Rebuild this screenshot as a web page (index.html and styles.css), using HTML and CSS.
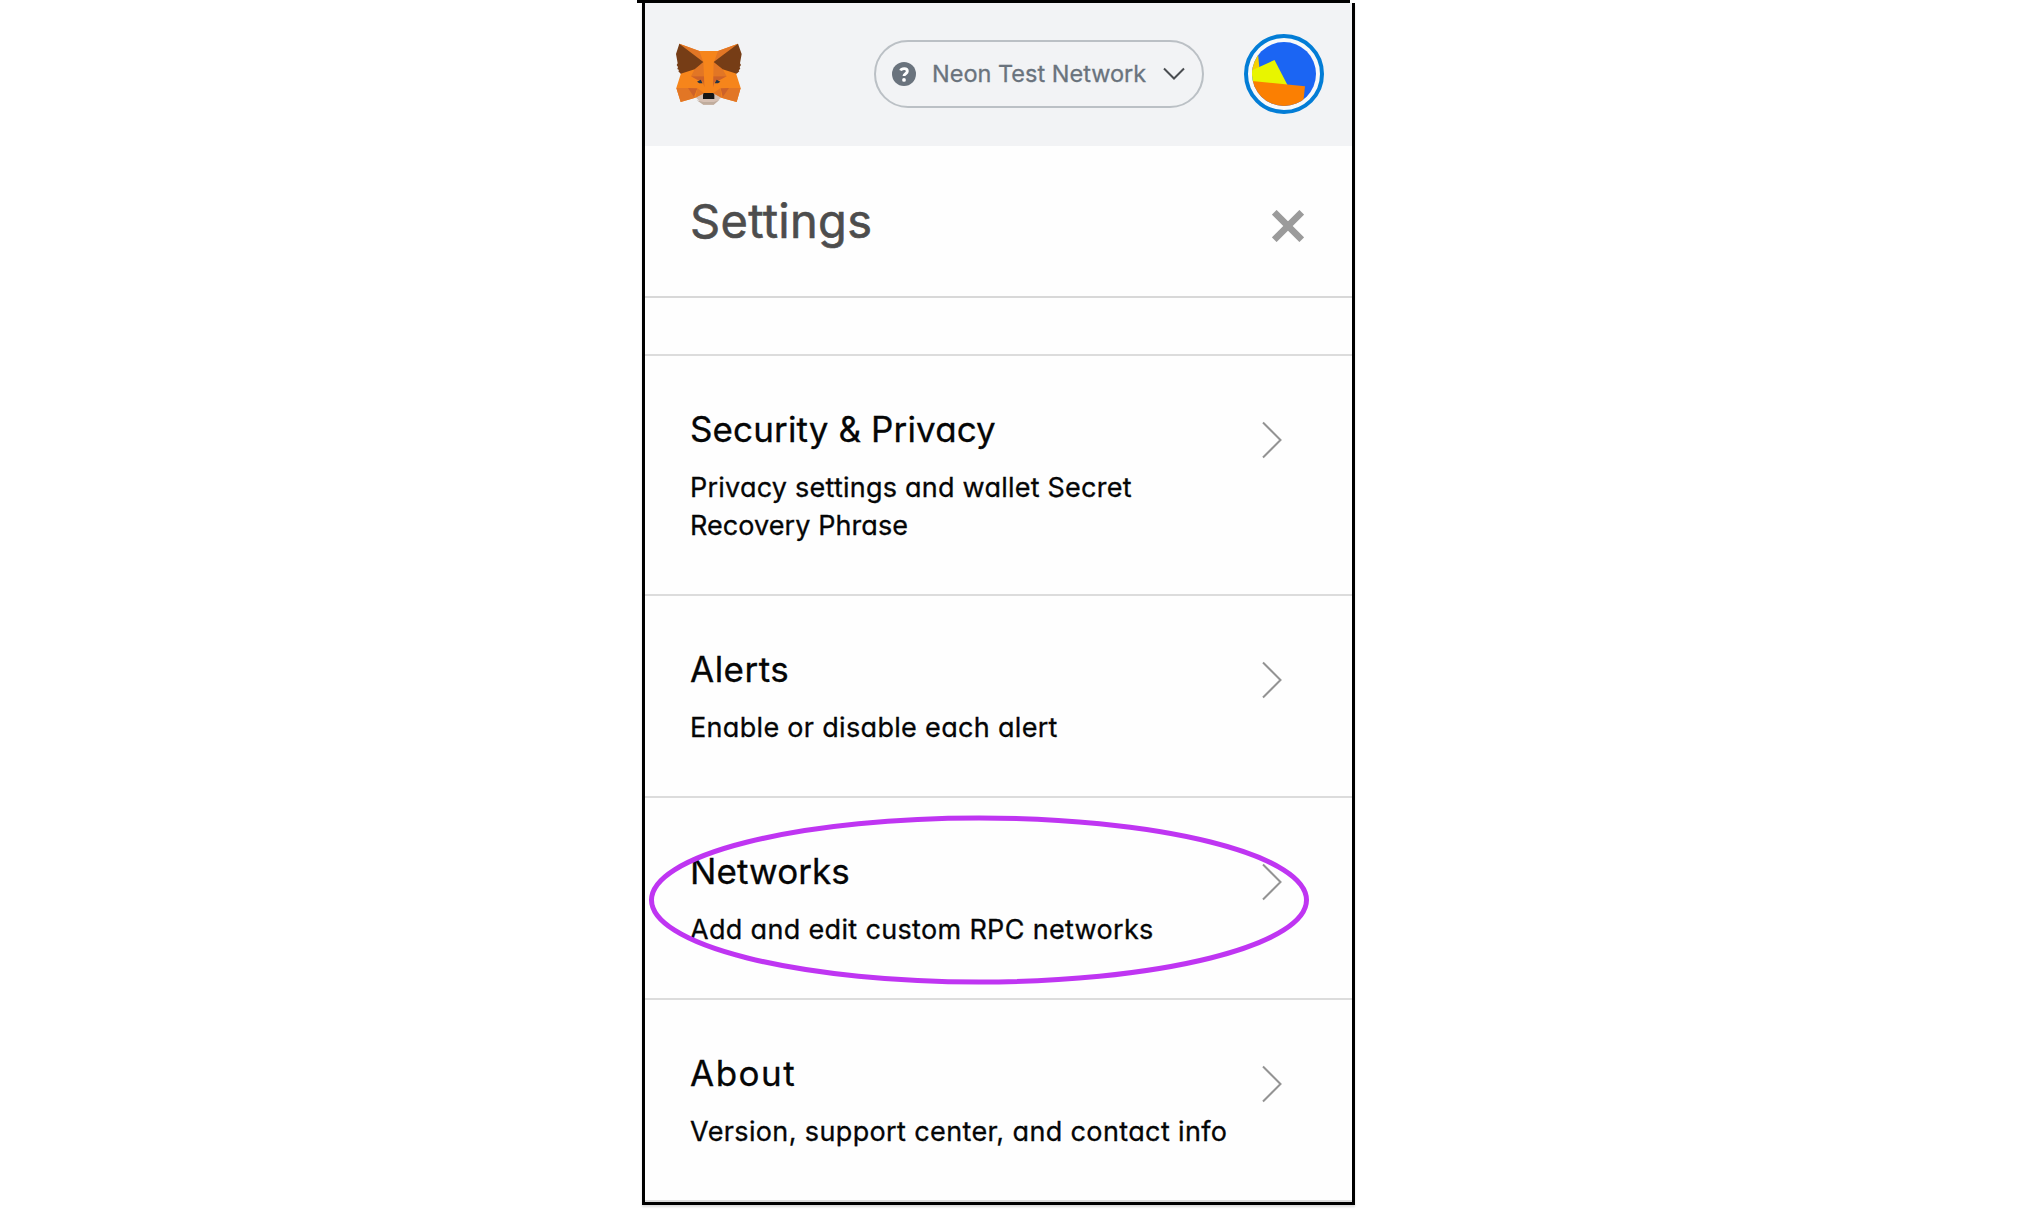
FILE: index.html
```html
<!DOCTYPE html>
<html lang="en">
<head>
<meta charset="utf-8">
<title>Settings</title>
<link rel="stylesheet" href="styles.css">
</head>
<body>
<div class="top-rule"></div>
<main class="wallet">
  <header class="bar">
    <svg class="fox" viewBox="135 129 201 189">
      <path fill="#d5bfb2" d="M195 290 222 278H250L276 290 251 314H220Z"/>
      <path fill="#c0ac9d" d="M200 301 220 306H252L269 299 251 314H220Z"/>
      <path fill="#f6851b" d="M148 131 208 153H264L324 131 318 220 332 264 320 306 274 293 252 280H219L196 293 152 306 139 264 153 220Z"/>
      <path fill="#e27625" d="M148 131 208 153 220 186ZM324 131 264 153 252 186ZM139 264H176L196 293 152 306ZM332 264H296L274 293 320 306ZM220 186 222 229H183L194 208ZM251 186 250 229H290L278 208Z"/>
      <path fill="#cd6229" d="M183 229H222L223 262 219 245 201 239ZM290 229H250L249 262 254 245 271 239ZM174 264 202 265 192 291ZM297 264 272 265 278 291Z"/>
      <path fill="#e27625" d="M202 265 223 280 196 293ZM271 265 249 280 275 293Z"/>
      <path fill="#763d16" d="M148 131 220 186 194 208 152 221 145 214 147 210 142 207 144 201 140 195 143 190 138 162ZM324 131 251 186 278 208 320 221 328 214 326 210 331 207 329 201 333 195 330 190 335 162Z"/>
      <path fill="#233447" d="M201 245 212 239 218 250H208ZM271 245 260 239 254 250H264Z"/>
      <path fill="#161616" d="M221 279H250L253 284V297H219V284Z"/>
    </svg>
    <div class="network">
      <svg class="help" viewBox="0 0 24 24"><circle cx="12" cy="12" r="12" fill="#6a737d"/><path d="M8.6 8.5C9.6 6.2 15.3 5.6 15.3 9.3 15.3 11.8 12 11.6 12 14" fill="none" stroke="#fff" stroke-width="2.9"/><circle cx="12" cy="17.9" r="1.9" fill="#fff"/></svg>
      <span class="network-name">Neon Test Network</span>
      <svg class="caret" viewBox="0 0 22 14"><path d="M1 1.5 11 11.5 21 1.5" fill="none" stroke="#4a4d51" stroke-width="2"/></svg>
    </div>
    <svg class="avatar" viewBox="0 0 80 80">
      <defs><clipPath id="disc"><circle cx="40" cy="40" r="32"/></clipPath></defs>
      <circle cx="40" cy="40" r="38" fill="#f8f9fa" stroke="#037dd6" stroke-width="4"/>
      <g clip-path="url(#disc)"><path fill="#1b65f3" d="M0 0H80V80H0Z"/><path fill="#f5d000" d="M0 15H13.500L16 40 0 45Z"/><path fill="#e8f500" d="M0 40 30.500 26 44 52 0 48Z"/><path fill="#fb7f02" d="M0 46.300 61 52.300 58 80H0Z"/></g>
    </svg>
  </header>
  <section class="heading">
    <h1>Settings</h1>
    <svg class="close" viewBox="0 0 32 32"><path d="M4.600 4.600 27.400 27.400M27.400 4.600 4.600 27.400" fill="none" stroke="#9b9b9b" stroke-width="6.600" stroke-linecap="square"/></svg>
  </section>
  <div class="scrolled"></div>
  <nav>
    <div class="row tall">
      <div class="copy"><h2>Security &amp; Privacy</h2><p><span class="first-line">Privacy settings and wallet Secret</span><br>Recovery Phrase</p></div>
      <svg class="arrow" viewBox="0 0 20 38"><path d="M1 1.500 18.500 19 1 36.500" fill="none" stroke="#939393" stroke-width="2"/></svg>
    </div>
    <div class="row alerts">
      <div class="copy"><h2>Alerts</h2><p>Enable or disable each alert</p></div>
      <svg class="arrow" viewBox="0 0 20 38"><path d="M1 1.500 18.500 19 1 36.500" fill="none" stroke="#939393" stroke-width="2"/></svg>
    </div>
    <div class="row networks">
      <div class="copy"><h2>Networks</h2><p>Add and edit custom RPC networks</p></div>
      <svg class="arrow" viewBox="0 0 20 38"><path d="M1 1.500 18.500 19 1 36.500" fill="none" stroke="#939393" stroke-width="2"/></svg>
    </div>
    <div class="row about">
      <div class="copy"><h2>About</h2><p>Version, support center, and contact info</p></div>
      <svg class="arrow" viewBox="0 0 20 38"><path d="M1 1.500 18.500 19 1 36.500" fill="none" stroke="#939393" stroke-width="2"/></svg>
    </div>
  </nav>
</main>
<svg class="marker" viewBox="0 0 662 170"><ellipse cx="331" cy="85" rx="327.500" ry="82" fill="none" stroke="#bf35f2" stroke-width="5"/></svg>
</body>
</html>
```
FILE: styles.css
```css
* { box-sizing: border-box; }
body {
  margin: 0;
  height: 1214px;
  overflow: hidden;
  background: #fff;
  color: #050606;
  font-family: Inter, "Liberation Sans", sans-serif;
  font-feature-settings: "cv11" 1;
  -webkit-text-stroke-width: 0.3px;
}
h1, h2, p { margin: 0; font-weight: 400; white-space: nowrap; }
svg { display: block; flex: none; }
.top-rule { width: 713px; height: 3px; margin-left: 637px; background: #000; }
.wallet {
  width: 713px;
  height: 1202px;
  margin-left: 642px;
  border: solid #000;
  border-width: 0 3px 3px;
  background: #fefefe;
  box-shadow: 0 2px 2px #ddd;
}
.bar {
  display: flex;
  align-items: center;
  height: 143px;
  padding: 0 28px 1px 30px;
  background: #f2f3f5;
}
.fox { width: 67px; height: 63px; margin-right: 132px; }
.network {
  display: flex;
  align-items: center;
  width: 330px;
  height: 68px;
  margin-right: 40px;
  padding-left: 16px;
  border: 2px solid #bbc0c5;
  border-radius: 34px;
}
.help { width: 24px; height: 24px; }
.network-name { width: 231px; margin-left: 16px; padding-bottom: 1px; color: #6a737d; font-size: 23.5px; white-space: nowrap; }
.caret { width: 22px; height: 14px; }
.avatar { width: 80px; height: 80px; }
.heading {
  display: flex;
  justify-content: space-between;
  height: 152px;
  padding: 47px 48px 0 45px;
  border-bottom: 2px solid #d8d8d8;
}
.heading h1 { color: #4d4d4d; font-size: 47px; line-height: 56px; letter-spacing: 0.3px; -webkit-text-stroke-width: 0.6px; }
.close { width: 32px; height: 32px; margin-top: 17px; }
.scrolled { height: 58px; border-bottom: 2px solid #dcdcdc; }
.row {
  display: flex;
  justify-content: space-between;
  height: 202px;
  padding: 51px 70px 0 45px;
  border-bottom: 2px solid #dcdcdc;
}
.tall { height: 240px; }
.row h2 { font-size: 35px; line-height: 44px; letter-spacing: 0.12px; }
.row p { margin-top: 18px; font-size: 27px; line-height: 38px; letter-spacing: 0.07px; }
.row .first-line { letter-spacing: 0.23px; }
.alerts h2 { letter-spacing: 0.5px; }
.networks h2 { letter-spacing: 0.1px; }
.about h2 { letter-spacing: 1.5px; }
.alerts p { letter-spacing: 0.32px; }
.networks p { letter-spacing: 0.33px; }
.about p { letter-spacing: 0.37px; }
.arrow { width: 20px; height: 38px; margin-top: 14px; }
.marker { position: absolute; left: 648px; top: 814.5px; width: 662px; height: 170px; }
```
